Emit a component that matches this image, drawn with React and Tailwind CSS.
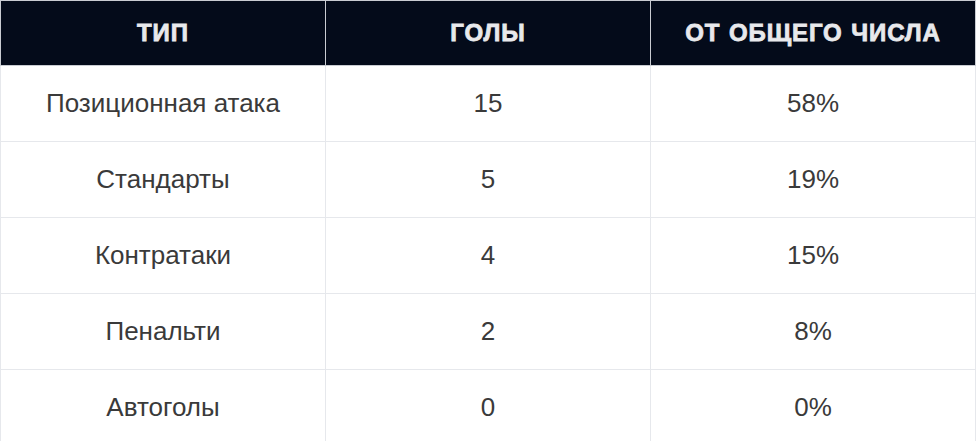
import React from "react";

const rows = [
  ["Позиционная атака", "15", "58%"],
  ["Стандарты", "5", "19%"],
  ["Контратаки", "4", "15%"],
  ["Пенальти", "2", "8%"],
  ["Автоголы", "0", "0%"],
];

export default function App() {
  return (
    <div className="w-[976px] h-[441px] overflow-hidden bg-white" style={{ fontFamily: '"Liberation Sans", Arial, sans-serif' }}>
      <table className="w-full table-fixed border-collapse">
        <thead>
          <tr className="h-[65px] bg-[#040b1a]">
            {["Тип", "Голы", "От общего числа"].map((h) => (
              <th
                key={h}
                className="border border-[#c9ccd2] text-center align-middle uppercase font-bold text-[24px] text-[#e8e9ec] tracking-[0.9px] [word-spacing:1px] [-webkit-text-stroke:0.8px_#e8e9ec]"
              >
                {h}
              </th>
            ))}
          </tr>
        </thead>
        <tbody>
          {rows.map((r) => (
            <tr key={r[0]} className="h-[76px]">
              {r.map((c, i) => (
                <td key={i} className="border border-[#e6e8ec] text-center align-middle text-[26px] text-[#3a3a3a]">
                  {c}
                </td>
              ))}
            </tr>
          ))}
        </tbody>
      </table>
    </div>
  );
}
